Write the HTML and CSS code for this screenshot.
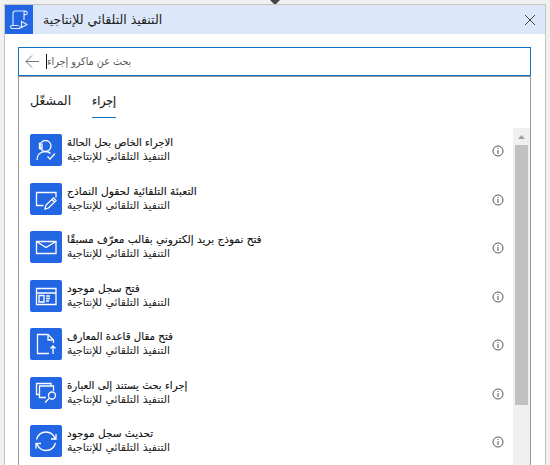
FILE: index.html
```
<!DOCTYPE html>
<html lang="ar">
<head>
<meta charset="utf-8">
<title>التنفيذ التلقائي للإنتاجية</title>
<link rel="stylesheet" href="styles.css">
</head>
<body>
<svg class="connector" width="10" height="4" viewBox="0 0 10 4"><path d="M0 0h10L6 4H4z"/></svg>
<main class="card">
  <header class="card-head">
    <svg class="logo" width="28" height="29" viewBox="0 0 28 29"><path d="M8 20.500V8.500a2.500 2.500 0 0 1 2.500-2.500h10a1.800 1.800 0 0 1 0 3.600h-1.500M20.500 6a1.800 1.800 0 0 0-1.500 1.800V15M13.500 20.500H7a1.500 1.500 0 0 0 0 3h8v-2.500M16.500 16.500v6l5.500-3z"/></svg>
    <h1><bdi dir="rtl">التنفيذ التلقائي للإنتاجية</bdi></h1>
    <svg class="close" width="12" height="12" viewBox="0 0 12 12"><path d="M1 1l10 10M11 1L1 11"/></svg>
  </header>
  <div class="search">
    <svg width="14" height="14" viewBox="0 0 14 14"><path d="M14 6.500H1M7 .5L1 6.500l6 6"/></svg>
    <span class="caret"></span>
    <span class="placeholder"><bdi dir="rtl">بحث عن ماكرو إجراء</bdi></span>
  </div>
  <section class="panel">
    <nav class="tabs">
      <span class="tab"><bdi dir="rtl">المشغّل</bdi></span>
      <span class="tab active"><bdi dir="rtl">إجراء</bdi></span>
    </nav>
    <div class="scroller">
      <ul class="list">
        <li><svg class="tile" viewBox="0 0 32 32"><circle cx="15.500" cy="12" r="5.500"/><path d="M10.500 9.500h-1v5h2.500v-5M7 26c0-5 3-8.500 8.500-8.500 2.500 0 4 .8 5 2M17.500 22.500l2.500 2.500 5-5.500"/></svg><div class="text"><b class="t narrow"><bdi dir="rtl">الاجراء الخاص بحل الحالة</bdi></b><span class="s"><bdi dir="rtl">التنفيذ التلقائي للإنتاجية</bdi></span></div><svg class="info" viewBox="0 0 12 12"><circle cx="6" cy="6" r="5"/><path d="M6 5v4M6 3v1"/></svg></li>
        <li><svg class="tile" viewBox="0 0 32 32"><path d="M13.500 22.500h-7v-13h19.500v5M15 26l1-4 7.500-7 2.500 2.500-7.500 7.500zM22 16.500l2.500 2.500"/></svg><div class="text"><b class="t wide"><bdi dir="rtl">التعبئة التلقائية لحقول النماذج</bdi></b><span class="s"><bdi dir="rtl">التنفيذ التلقائي للإنتاجية</bdi></span></div><svg class="info" viewBox="0 0 12 12"><circle cx="6" cy="6" r="5"/><path d="M6 5v4M6 3v1"/></svg></li>
        <li><svg class="tile" viewBox="0 0 32 32"><path d="M6.500 10.500h19.500v12H6.500zM6.500 10.500l9.500 6 10-6"/></svg><div class="text"><b class="t"><bdi dir="rtl">فتح نموذج بريد إلكتروني بقالب معرّف مسبقًا</bdi></b><span class="s"><bdi dir="rtl">التنفيذ التلقائي للإنتاجية</bdi></span></div><svg class="info" viewBox="0 0 12 12"><circle cx="6" cy="6" r="5"/><path d="M6 5v4M6 3v1"/></svg></li>
        <li><svg class="tile" viewBox="0 0 32 32"><path d="M6.500 8.500h19.500v16H6.500zM6.500 13h19.500M9 15.500h5v6.500H9zM16 16h4M16 18.500h4M16 21h3"/></svg><div class="text"><b class="t"><bdi dir="rtl">فتح سجل موجود</bdi></b><span class="s"><bdi dir="rtl">التنفيذ التلقائي للإنتاجية</bdi></span></div><svg class="info" viewBox="0 0 12 12"><circle cx="6" cy="6" r="5"/><path d="M6 5v4M6 3v1"/></svg></li>
        <li><svg class="tile" viewBox="0 0 32 32"><path d="M19 25.500H7.500v-19h10.500l5.500 5.500v3M18 6.500V12h5.500M23 26v-8M20.500 20.500L23 18l2.500 2.500"/></svg><div class="text"><b class="t snug"><bdi dir="rtl">فتح مقال قاعدة المعارف</bdi></b><span class="s"><bdi dir="rtl">التنفيذ التلقائي للإنتاجية</bdi></span></div><svg class="info" viewBox="0 0 12 12"><circle cx="6" cy="6" r="5"/><path d="M6 5v4M6 3v1"/></svg></li>
        <li><svg class="tile" viewBox="0 0 32 32"><path d="M9 17.500H6.500v-11H21V9M16 20.500H9.500V9h14v5M19 21.500l-4 4"/><circle cx="22" cy="18.500" r="3.500"/></svg><div class="text"><b class="t snug"><bdi dir="rtl">إجراء بحث يستند إلى العبارة</bdi></b><span class="s"><bdi dir="rtl">التنفيذ التلقائي للإنتاجية</bdi></span></div><svg class="info" viewBox="0 0 12 12"><circle cx="6" cy="6" r="5"/><path d="M6 5v4M6 3v1"/></svg></li>
        <li><svg class="tile" viewBox="0 0 32 32"><path d="M6.500 14.500C8 9.500 11.500 7 16 7c4.500 0 7.500 2.500 9 6.500M26 9v5h-5M25.500 18C24 23 20.500 25.500 16 25.500c-4.500 0-7.500-2.500-9-6.500M6 23.500v-5h5"/></svg><div class="text"><b class="t"><bdi dir="rtl">تحديث سجل موجود</bdi></b><span class="s"><bdi dir="rtl">التنفيذ التلقائي للإنتاجية</bdi></span></div><svg class="info" viewBox="0 0 12 12"><circle cx="6" cy="6" r="5"/><path d="M6 5v4M6 3v1"/></svg></li>
      </ul>
      <div class="bar"><svg width="17" height="17" viewBox="0 0 17 17"><path d="M5 11h7L8.500 7z"/></svg><div class="thumb"></div></div>
    </div>
  </section>
</main>
</body>
</html>
```
FILE: styles.css
```
* { box-sizing: border-box; }
body { margin: 0; height: 465px; overflow: hidden; background: #f0f0f0; font-family: "DejaVu Sans", sans-serif; color: #222; padding: 4px 4px 0; }
svg { display: block; flex: none; fill: none; }
.connector { position: absolute; left: 270px; top: 0; fill: #444; }
.card { width: 542px; height: 480px; border: 1px solid #c4c4c4; background: #fff; }
.card-head { height: 29px; display: flex; align-items: center; background: #dce7f9; }
.logo { background: #2266e3; stroke: #e4edff; stroke-width: 1.1; }
h1 { flex: 1; margin: 0 0 0 10px; font-size: 12.500px; font-weight: 400; white-space: nowrap; }
.close { margin-right: 9px; stroke: #444; }
.search { margin: 13px 14px 0 13px; height: 29px; border: 1px solid #1170c2; display: flex; align-items: center; padding-left: 6px; }
.search svg { stroke: #777; }
.caret { width: 1px; height: 15px; background: #111; margin-left: 7px; }
.placeholder { font-family: "DejaVu Sans Condensed", "DejaVu Sans", sans-serif; font-size: 10.700px; color: #555; white-space: nowrap; }
.panel { margin: 0 14px 0 13px; height: 400px; border: 1px solid #999; }
.tabs { display: flex; height: 51px; padding: 15px 0 0 11px; gap: 22px; font-size: 12.500px; }
.tab { height: 26px; line-height: 18px; white-space: nowrap; width: 40px; }
.tab.active { width: 24px; border-bottom: 1px solid #1170c2; font-family: "DejaVu Sans Condensed", "DejaVu Sans", sans-serif; font-size: 12.200px; -webkit-text-stroke: .2px; }
.scroller { display: flex; }
.list { flex: 1; margin: 0; padding: 6px 9px 0 11px; list-style: none; }
.list li { height: 48.500px; display: flex; align-items: flex-start; }
.tile { width: 32px; height: 32px; border-radius: 2px; background: #2266e3; stroke: #fff; stroke-width: 1.3; }
.text { flex: 1; margin-left: 5px; padding-top: 1px; white-space: nowrap; }
.t, .s { display: block; font-size: 10.800px; line-height: 14px; font-weight: 400; }
.s { padding-top: 1px; }
.t { font-size: 10.500px; color: #111; -webkit-text-stroke: .12px; transform-origin: left; }
.t.narrow { transform: scaleX(.96); }
.t.snug { transform: scaleX(.975); }
.t.wide { transform: scaleX(1.017); }
.info { width: 12px; height: 12px; margin-top: 11px; stroke: #555; }
.bar { width: 17px; height: 340px; background: #f0f0f0; }
.bar svg { fill: #a0a0a0; }
.thumb { width: 13px; height: 260px; margin-left: 2px; background: #c1c1c1; }
```
